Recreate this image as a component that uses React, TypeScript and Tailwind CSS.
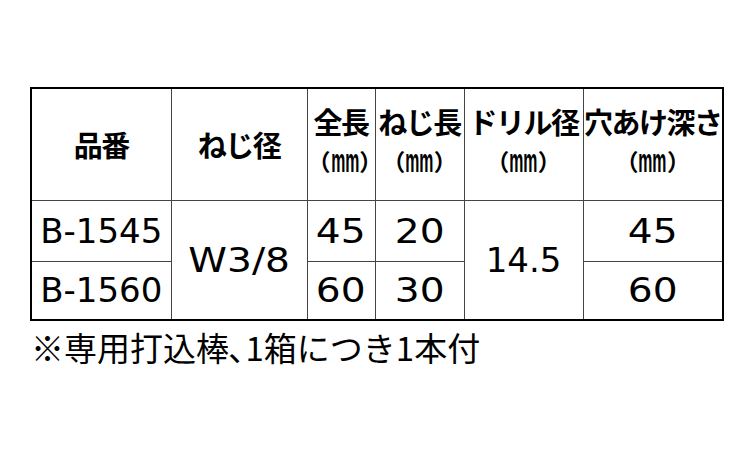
const jp = "font-['Noto_Sans_CJK_JP','Noto_Sans',sans-serif]";
const num = "font-['DejaVu_Sans','Liberation_Sans',sans-serif]";

function Unit() {
  return (
    <div className="text-[23px] leading-none mt-[8px] whitespace-nowrap">
      （
      <span className="font-['Liberation_Sans',sans-serif] inline-block font-bold text-[33px] leading-none -mx-[15px] scale-x-[0.48] align-[-1px]">
        mm
      </span>
      ）
    </div>
  );
}

function Head({ title, unit }: { title: string; unit?: boolean }) {
  return (
    <th className="border border-[#444] p-0 align-middle text-center">
      <div className={`${jp} font-bold text-black leading-none ${unit ? "-mt-[4px]" : "mt-[1px]"}`}>
        <div className="text-[29px] tracking-[-1.5px] whitespace-nowrap">{title}</div>
        {unit && <Unit />}
      </div>
    </th>
  );
}

function Wide({ children }: { children: string }) {
  return <span className="inline-block scale-x-[1.15]">{children}</span>;
}

export default function App() {
  const cell = `border border-[#444] p-0 text-center align-middle ${num} text-[34px] text-black leading-none`;
  return (
    <div className="w-[750px] h-[450px] bg-white pt-[87px] pl-[30px]">
      <table className="w-[692px] table-fixed border-2 border-black">
        <colgroup>
          <col className="w-[140px]" />
          <col className="w-[136px]" />
          <col className="w-[68px]" />
          <col className="w-[89px]" />
          <col className="w-[119px]" />
          <col className="w-[140px]" />
        </colgroup>
        <thead>
          <tr className="h-[112px]">
            <Head title="品番" />
            <Head title="ねじ径" />
            <Head title="全長" unit />
            <Head title="ねじ長" unit />
            <Head title="ドリル径" unit />
            <Head title="穴あけ深さ" unit />
          </tr>
        </thead>
        <tbody>
          <tr className="h-[61px]">
            <td className={cell}>B-1545</td>
            <td className={cell} rowSpan={2}>
              <Wide>W3/8</Wide>
            </td>
            <td className={cell}>
              <Wide>45</Wide>
            </td>
            <td className={cell}>
              <Wide>20</Wide>
            </td>
            <td className={cell} rowSpan={2}>
              14.5
            </td>
            <td className={cell}>
              <Wide>45</Wide>
            </td>
          </tr>
          <tr className="h-[59px]">
            <td className={cell}>B-1560</td>
            <td className={cell}>
              <Wide>60</Wide>
            </td>
            <td className={cell}>
              <Wide>30</Wide>
            </td>
            <td className={cell}>
              <Wide>60</Wide>
            </td>
          </tr>
        </tbody>
      </table>
      <p className={`${jp} font-normal text-[33px] leading-none text-black mt-[10px] ml-[1px] tracking-[0px] whitespace-nowrap`}>
        ※専用打込棒､1箱につき1本付
      </p>
    </div>
  );
}
